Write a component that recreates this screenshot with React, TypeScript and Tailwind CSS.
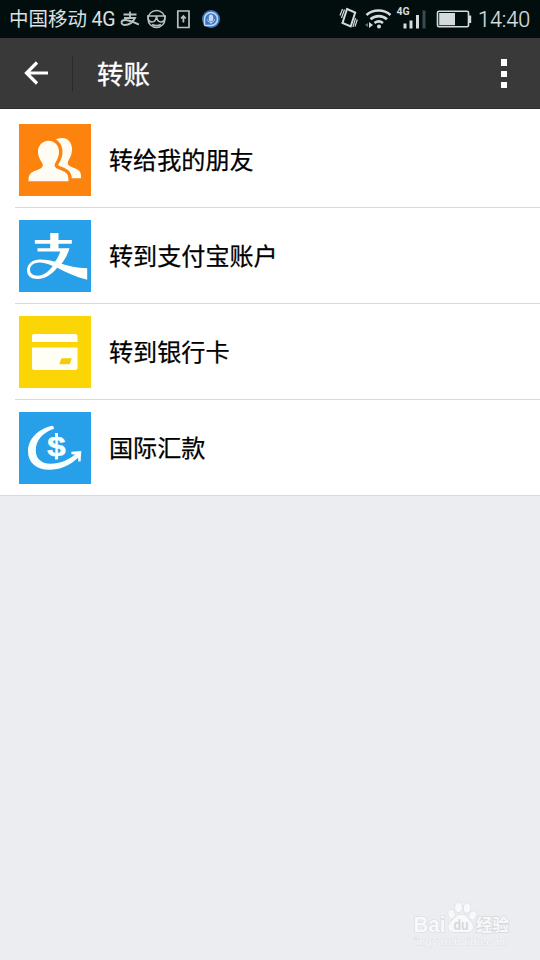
import type { ReactNode } from 'react'

interface TransferItem {
  label: string
  color: string
  icon: ReactNode
}

function FriendsIcon() {
  return (
    <svg viewBox="0 0 72 72" className="size-[72px]" fill="#fffdf3">
      <path d="M43 14c6 0 10 4.800 10 11 0 4.500-1.500 8-3.500 11.500-1.200 2.200-1 4 .8 5.300 3 2 8 3 10 5.200 1.600 1.800 1.900 4.500 1.800 7.300H40L34 18c2-2.500 5-4 9-4z" />
      {/* the outline in the tile colour keeps the two figures apart */}
      <path stroke="#fc830d" strokeWidth="7" style={{ paintOrder: 'stroke' }} d="M29.500 16.800c6.500 0 10.500 5 10.500 11 0 4.200-1.600 7.700-3.600 11-1.200 2-1 4 .8 5.300 3 2 8.500 3 10.500 5.500 1.600 2 1.800 4.500 1.800 7.600h-40c-.1-3 .2-5.600 1.900-7.500 2.300-2.500 7.800-3.500 10.800-5.600 1.900-1.300 2-3.300.8-5.300-2.200-3.300-4-6.800-4-11 0-6 4-11 10.500-11z" />
    </svg>
  )
}

function AlipayIcon() {
  return (
    <svg viewBox="0 0 72 72" className="size-[72px]" fill="#fffffb">
      <path d="M31.200 13h8.300v7h13.300v3.700H39.500v4.600h11c-1.300 5.200-4.300 10.700-8 15.400 6.500 2.300 15 4.100 25.700 4.600v11.400c-10.700-2.700-21.200-7.400-30-12C32.500 54.500 26 59 18.500 59 12 59 8 55.500 8 50.500c0-6.500 5.500-11 13-11 5 0 10 .8 15 2.300 2.500-3.300 4.200-7 5.200-10.200H18.500v-3.300h12.700v-4.600H15.800V20h15.400zM20 42.500c-5.500.2-9 3.300-9 7.300 0 3.500 3 5.900 7.500 5.900 6 0 11.200-4.200 15.200-9.700-4.800-2.200-9.200-3.600-13.700-3.500z" />
    </svg>
  )
}

function CardIcon() {
  return (
    <svg viewBox="0 0 72 72" className="size-[72px]">
      <path fill="#fffff6" d="M15 18h41.500q2 0 2 2v6H13v-6q0-2 2-2zM13 31.500h45.500V52q0 2-2 2H15q-2 0-2-2z" />
      <path fill="#f4cb0c" d="M42.500 42.200h10.300l-2 6H40.200z" />
    </svg>
  )
}

function GlobalIcon() {
  return (
    <svg viewBox="0 0 72 72" className="size-[72px]" fill="#f8ffff">
      <path d="M34 13.800l1.200 3C24 20.500 16.800 28 16.800 38.500c0 8.500 6 13.300 14.700 13.300 9.500 0 18-4 24.500-9.300l-3.500-.3-.2-2.400 10-.8-.7 10.400-2.300.1-.2-3.800C51.500 53 41.500 57.700 30 57.700c-12.500 0-21-7-21-18.200C9 27 19 16.500 34 13.800z" />
      <text transform="translate(37.500 43.800) scale(1.220 1)" textAnchor="middle" fontSize="27" fontWeight="700" fontFamily="Liberation Sans, sans-serif" stroke="#f8ffff" strokeWidth=".5">$</text>
      <path d="M36 21h3v5h-3zM36 43h3v4.500h-3z" />
    </svg>
  )
}

const items: TransferItem[] = [
  { label: '转给我的朋友', color: 'bg-[#fc830d]', icon: <FriendsIcon /> },
  { label: '转到支付宝账户', color: 'bg-[#279fe9]', icon: <AlipayIcon /> },
  { label: '转到银行卡', color: 'bg-[#fcd507]', icon: <CardIcon /> },
  { label: '国际汇款', color: 'bg-[#279fe9]', icon: <GlobalIcon /> },
]

function StatusBar() {
  return (
    <div className="flex h-[38px] shrink-0 items-center justify-between bg-[#020d0e] pr-[9px] pl-[9px] text-[#dce0e0]">
      <div className="flex items-center">
        <span className="w-[107px] text-[19.500px] leading-none whitespace-nowrap">
          中国移动 <span className="font-[Roboto]">4G</span>
        </span>
        {/* notification icons */}
        <svg width="105" height="24" viewBox="0 0 105 24" fill="none" stroke="#b9c0c0" className="ml-1">
          <path strokeWidth="1.800" d="M3.500 7.500h13M10 4.500v6M4 11h11c-2 4-6 7-10 7-2 0-3.500-1-3.500-2.500S3 13 5.500 13c4.500 0 9 3 13.500 4.500" />
          <circle cx="36.500" cy="12" r="8.500" strokeWidth="1.400" />
          <path strokeWidth="1.700" d="M27 9h19M28 9.500c0 3.500 1.500 5.500 4 5.500s4-2 4.500-5.500c.5 3.500 2 5.500 4.500 5.500s4-2 4-5.500M32 17.500c3 1.500 6 1.500 9 0" />
          <path strokeWidth="1.700" d="M57.800 4h11.200v16.500H57.800z" />
          <path strokeWidth="1.800" d="M63.400 15.500V10M61 11.500l2.400-2.500 2.400 2.500" />
          <circle cx="91" cy="12" r="9" fill="#3d76c2" stroke="none" />
          <path stroke="#c0d8f3" strokeWidth="1.500" d="M84.500 18.500V12a6.500 6.500 0 1 1 6.500 6.500h-6.500" />
          <rect x="88.800" y="7.500" width="4.400" height="7" rx="2.200" fill="#c0d8f3" stroke="none" />
          <path stroke="#c0d8f3" d="M87.500 12.500c.5 4 6.500 4 7 0M91 15.500v1.500" />
        </svg>
      </div>
      <div className="flex items-center">
        <svg width="136" height="30" viewBox="0 0 136 30" fill="none" stroke="#d5dada" className="-translate-y-px">
          {/* vibrate */}
          <path strokeWidth="2" d="M9 6l8.200 3.500-4.500 14-8.200-3.500z" />
          <path strokeWidth="1.200" d="M4.500 6L2 12.500M6.500 6.500L3.500 15M19.300 16.500l-2.300 7M17.600 15l-2.700 9" />
          {/* wifi */}
          <path strokeWidth="2.600" d="M28.500 12c6.500-6 17.500-6 24 0M32.500 16.300c4.500-4.200 12-4.200 16.500 0M36.500 20c2.500-2 6-2 8.500 0" />
          <circle cx="41" cy="23.500" r="2" fill="#d5dada" stroke="none" />
          <path fill="#d5dada" stroke="none" d="M31 19v6l4-3z" />
          <path fill="#617071" stroke="none" d="M30 20v4l-3-2z" />
          {/* signal */}
          <text x="58.500" y="11.500" fontSize="10.500" fontWeight="700" fontFamily="Roboto, sans-serif" fill="#d5dada" stroke="none">4G</text>
          <path strokeWidth="3" d="M67 25.500v-5M73 25.500v-8M79.500 25.500V12" />
          <path stroke="#394b4e" strokeWidth="3" d="M86 25.500V7.500" />
          {/* battery */}
          <rect x="99.500" y="8.300" width="31" height="15.500" rx="1.500" strokeWidth="1.600" />
          <path fill="#d5dada" stroke="none" d="M101.200 10H117v12.200h-15.800zM131 12.500h2.200v7.500H131z" />
        </svg>
        <span className="ml-[4px] w-[53px] translate-y-px font-[Roboto] text-[21.500px] leading-none font-light whitespace-nowrap [-webkit-text-stroke:0.200px_#dce0e0]">14:40</span>
      </div>
    </div>
  )
}

function Header() {
  return (
    <div className="flex h-[71px] shrink-0 items-center border-b border-[#2d2d2d] bg-[#393939]">
      <svg width="24" height="24" viewBox="0 0 24 24" className="ml-6" fill="none" stroke="#fff" strokeWidth="3.200">
        <path d="M24 12H2.500M13 1.500L2.500 12 13 22.500" />
      </svg>
      <div className="ml-6 h-[35px] w-px bg-[#292929]" />
      <h1 className="ml-6 text-[26.500px] leading-none text-white [-webkit-text-stroke:0.300px_#fff]">转账</h1>
      <div className="mr-[33px] ml-auto flex flex-col gap-[5px]">
        <span className="h-[7px] w-[6px] bg-white" />
        <span className="h-[6px] w-[6px] bg-white" />
        <span className="h-[6px] w-[6px] bg-white" />
      </div>
    </div>
  )
}

function Watermark() {
  return (
    <svg width="104" height="50" viewBox="0 0 104 50" className="mr-[24px] mb-[10px]" fill="#f8f9fa" stroke="#d5d8dc" strokeWidth="1.400" style={{ paintOrder: 'stroke' }}>
      <text x="1.500" y="31.500" fontSize="21.500" fontWeight="700" fontFamily="Liberation Sans, sans-serif" strokeWidth="1.200" textLength="32" lengthAdjust="spacingAndGlyphs">Bai</text>
      <g strokeWidth="1">
        <ellipse cx="39.500" cy="14" rx="3.200" ry="4.300" transform="rotate(-12 39.500 14)" />
        <ellipse cx="46.500" cy="7.500" rx="3.500" ry="4.900" />
        <ellipse cx="55" cy="8" rx="3.500" ry="4.900" transform="rotate(8 55 8)" />
        <ellipse cx="60.700" cy="15.500" rx="3.300" ry="4.300" transform="rotate(20 60.700 15.500)" />
        <path d="M49.500 14.500c5.500 0 6.500 4.500 9.500 7.500 3.500 3.500 3 9.800-3 10H42c-6 0-7.500-6-3.500-10 4-3.500 5.500-7.500 11-7.500z" />
      </g>
      <text x="41.500" y="29.500" fontSize="14.500" fontWeight="700" fontFamily="Liberation Sans, sans-serif" fill="#d5d8dc" stroke="none" textLength="15" lengthAdjust="spacingAndGlyphs">du</text>
      <text x="64" y="30.500" fontSize="16.500" fontWeight="700" fontFamily="Noto Sans CJK SC, sans-serif" strokeWidth="1.400" textLength="33">经验</text>
      <text x="1.500" y="45" fontSize="9" fontFamily="Liberation Sans, sans-serif" strokeWidth=".8" stroke="#dee1e5" textLength="95" lengthAdjust="spacingAndGlyphs">jingyan.baidu.com</text>
    </svg>
  )
}

export default function App() {
  return (
    <div className="flex h-[960px] w-[540px] flex-col overflow-hidden bg-[#ebedf0] font-['Noto_Sans_CJK_SC',sans-serif]">
      <StatusBar />
      <Header />
      <ul className="border-b border-[#d7d9db] bg-white pt-[3px]">
        {items.map((item) => (
          <li key={item.label} className="group flex h-24 pl-[15px] last:h-[95px]">
            <div className="flex flex-1 items-center border-b border-[#dadada] pl-1 group-last:border-b-0">
              <div className={`size-[72px] ${item.color}`}>{item.icon}</div>
              <span className="ml-[18px] -translate-y-px text-[24.100px] leading-6 text-black [-webkit-text-stroke:0.250px_#000]">{item.label}</span>
            </div>
          </li>
        ))}
      </ul>
      <div className="mt-auto flex justify-end">
        <Watermark />
      </div>
    </div>
  )
}
